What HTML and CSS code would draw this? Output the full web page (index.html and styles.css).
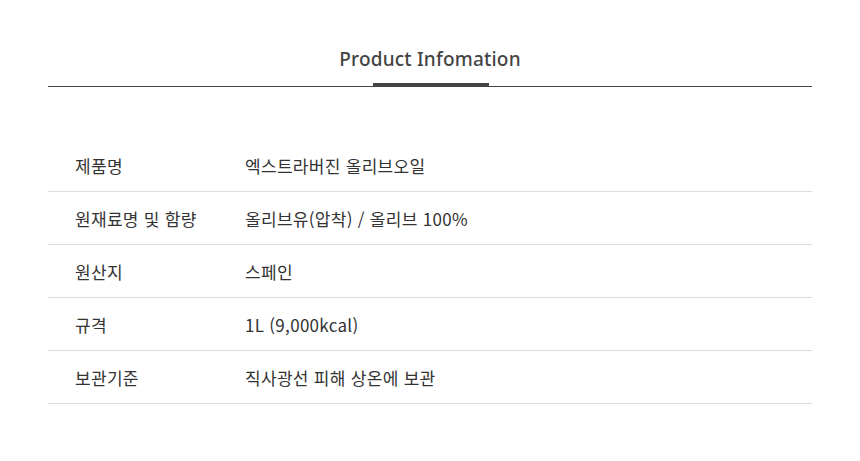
FILE: index.html
```html
<!DOCTYPE html>
<html lang="ko">
<head>
<meta charset="utf-8">
<link rel="stylesheet" href="styles.css">
</head>
<body>
<section class="info">
  <div class="head">
    <h2 class="title">Product Infomation</h2>
    <span class="bar"></span>
  </div>
  <table class="spec">
    <tr><th>제품명</th><td>엑스트라버진 올리브오일</td></tr>
    <tr><th>원재료명 및 함량</th><td>올리브유(압착) / 올리브 100%</td></tr>
    <tr><th>원산지</th><td>스페인</td></tr>
    <tr><th>규격</th><td>1L (9,000kcal)</td></tr>
    <tr><th>보관기준</th><td>직사광선 피해 상온에 보관</td></tr>
  </table>
</section>
</body>
</html>
```
FILE: styles.css
```css
html, body { margin: 0; padding: 0; background: #fff; }
body { font-family: "Noto Sans", "Noto Sans CJK KR", sans-serif; color: #333; }
.info { padding: 0 48px; }
.head { position: relative; border-bottom: 1px solid #444; height: 86px; display: flex; justify-content: center; }
.title { margin: 0; padding-top: 46px; font-size: 19px; font-weight: 500; color: #444; line-height: 26px; letter-spacing: 0.2px; }
.bar { position: absolute; bottom: 0; left: 325px; width: 116px; height: 3px; background: #444; }
.spec { width: 100%; border-collapse: collapse; margin-top: 52px; font-family: "Noto Sans CJK KR", sans-serif; font-size: 17px; letter-spacing: 0.3px; color: #333; }
.spec tr { border-bottom: 1px solid #ddd; }
.spec th, .spec td { height: 52px; padding: 0; text-align: left; font-weight: 400; vertical-align: middle; }
.spec th { width: 170px; padding-left: 27px; }
```
